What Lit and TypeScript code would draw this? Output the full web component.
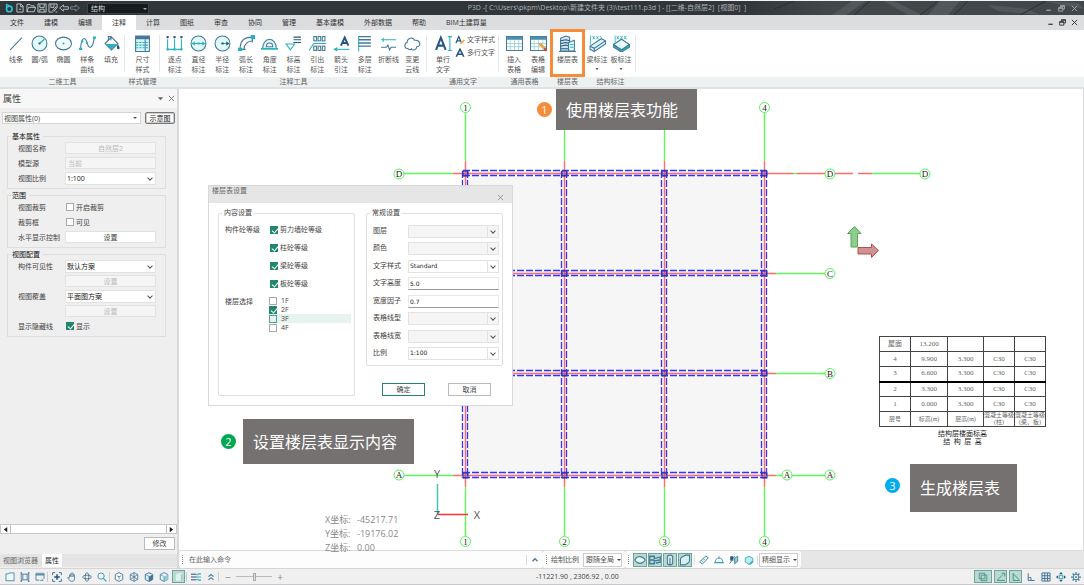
import { LitElement, html, svg, css } from "lit";
import { customElement } from "lit/decorators.js";
import { classMap } from "lit/directives/class-map.js";

const B = "#44789a";
const C = "#25b3bf";
const D = "#26567c";

/* Every glyph is drawn on a 16 x 16 grid. */
const ICONS: Record<string, unknown> = {
  line: svg`<path d="M3 14L14 2.500" stroke=${B}/>`,
  circle: svg`<circle cx="8" cy="8" r="7" fill="#e3f8f9" stroke=${B}/><path d="M8 8l4.500-4" stroke=${C} stroke-width="1.500"/><circle cx="8" cy="8" r="1" fill=${D} stroke="none"/>`,
  ellipse: svg`<ellipse cx="8" cy="8" rx="7.500" ry="6" fill="#f2fcfc" stroke=${B}/><circle cx="8" cy="8" r="1" fill=${C} stroke="none"/>`,
  spline: svg`<path d="M1.500 13C2 2 6 1 7.500 7s5 8 7-5" stroke=${B}/><path d="M0 12h3v2H0zM6.500 6.500h2v2h-2zM13 1.500h3v2h-3zM2 5h2v2H2z" fill=${C} stroke="none"/>`,
  fill: svg`<path d="M2 8l6-6 6 6-6 6z" fill="#fff" stroke=${B}/><path d="M3 8.500h10L8 13.500z" fill=${C} stroke="none"/><path d="M5 5V1.500h2.500V5" stroke=${B}/><path d="M14 8.500c2 3 2 5 .5 5s-2-2-.5-5z" fill=${D} stroke="none"/>`,
  dimstyle: svg`<path d="M1.500 1h13v14.500h-13z" fill="#d8f6f7" stroke=${B}/><path d="M1.500 1h13v3h-13z" fill=${B} stroke="none"/><path d="M2 7h12M2 9.500h12M2 12h12" stroke=${C} stroke-dasharray="2 1"/><path d="M10.500 4v11" stroke=${B}/>`,
  points: svg`<path d="M1.500 4v9.500M8 4v9.500M14.500 4v9.500M1 13.500h14" stroke=${C}/><path d="M.5 1h2v2h-2zM7 1h2v2H7zM13.500 1h2v2h-2z" fill=${D} stroke="none"/><path d="M.5 12.500h2v2h-2zM7 12.500h2v2H7zM13.500 12.500h2v2h-2z" fill=${C} stroke="none"/>`,
  diameter: svg`<circle cx="8" cy="8" r="7" fill="#e3f8f9" stroke=${B}/><path d="M2 8h12" stroke=${C}/><path d="M1.500 8l3-2v4zM14.500 8l-3-2v4zM7 7h2v2H7z" fill=${C} stroke="none"/>`,
  radius: svg`<circle cx="8" cy="8" r="7" fill="#e3f8f9" stroke=${B}/><path d="M7 8h7" stroke=${C}/><path d="M14.500 8l-3-2v4zM7 7h2v2H7z" fill=${D} stroke="none"/>`,
  arc: svg`<path d="M2 13C2 6 6 2 13 2M5.500 13.500C6 9 9 6 13.500 5.500M1 13.500h6M13.500 1v6" stroke=${B}/><path d="M0 12h4v3H0zM12 0h4v4h-4z" fill=${C} stroke="none"/>`,
  angle: svg`<path d="M1.500 13a6.500 9 0 0113 0z" fill="#d8f6f7" stroke=${B}/><path d="M5 11a3 3.500 0 016 0z" fill="#fff" stroke=${B}/><path d="M0 13h16" stroke=${C} stroke-width="1.500"/>`,
  level: svg`<path d="M1 8.500h8L5 14z" stroke=${C}/><path d="M8 2h7M8 4.500h7M8 7h7" stroke=${D}/>`,
  leader: svg`<path d="M0 14.500L4.500 8H16" stroke=${C}/><g stroke=${B}><rect x="4.500" y="1.500" width="2.500" height="4"/><rect x="8.500" y="1.500" width="2.500" height="4"/><rect x="12.500" y="1.500" width="2.500" height="4"/><rect x="4.500" y="10.500" width="2.500" height="4"/><rect x="8.500" y="10.500" width="2.500" height="4"/><rect x="12.500" y="10.500" width="2.500" height="4"/></g>`,
  arrow: svg`<path d="M7.500 10L11 2.500 14.500 10M9 7.500h4" stroke=${D} stroke-width="1.900"/><path d="M2 13.500h13.500" stroke=${C}/><path d="M0 13.500l4-2v4z" fill=${C} stroke="none"/>`,
  multi: svg`<path d="M2.500 1v14.500" stroke=${C}/><path d="M2.500 1.500H14M2.500 4.500H14M2.500 7.500H14M2.500 10.500H14" stroke=${B} stroke-width="1.300"/>`,
  breakline: svg`<path d="M1 4.500h14M3 2.500v4" stroke=${C}/><path d="M1 11.500h5l1.500-2L9 14l1.500-2.500H15" stroke=${B}/>`,
  cloud: svg`<path d="M4 13c-4 0-4-5-1-6 0-5 6-5 7-2 5-1 7 6 2 6 0 3-4 4-5 2-1 1-2 1-3 0z" stroke=${B}/>`,
  text: svg`<path d="M1 14L5.500 2.500 10 14M2.500 10h6" stroke=${D} stroke-width="1.900"/><path d="M14 1.500v13M12 1.500h4M12 14.500h4" stroke=${C}/>`,
  textstyle: svg`<path d="M1.500 13L6 2.500 10.500 13M3.500 9.500h5" stroke=${D} stroke-width="2"/><path d="M9 14l6-6" stroke="#f0a53a" stroke-width="2.500"/>`,
  mtext: svg`<path d="M2 14L8 2l6 12M4.500 10h7" stroke=${D} stroke-width="2.600"/>`,
  table: svg`<path d="M.5 1.500h15v13H.5z" fill="#fff" stroke=${B}/><path d="M.5 1.500h15v3H.5z" fill="#4d8fb0" stroke="none"/><path d="M4 5v9M8 5v9M12 5v9M1 8h14M1 11h14" stroke="#8fc6d3" stroke-width=".7"/>`,
  tableedit: svg`<path d="M.5 1.500h15v13H.5z" fill="#fff" stroke=${B}/><path d="M.5 1.500h15v3H.5z" fill="#4d8fb0" stroke="none"/><path d="M4 5v9M8 5v9M12 5v9M1 8h14M1 11h14" stroke="#8fc6d3" stroke-width=".7"/><path d="M9 8l5.500 5.500" stroke="#f0a53a" stroke-width="2.400"/><path d="M13.500 12.500l2 2.500" stroke="#d24a3a" stroke-width="2"/>`,
  floor: svg`<path d="M1.500 3l5-2 3.500 1v13H1.500z" fill="#cfe6ee" stroke=${B}/><path d="M1.500 5.500l5-1 3.500 1M1.500 8l5-1 3.500 1M1.500 10.500l5-1 3.500 1M1.500 13h8" stroke=${D}/><path d="M9 7l5.500-2v10H9z" fill="#e3f8f9" stroke=${B}/><path d="M10.500 9h3M10.500 11.500h3" stroke=${C}/><path d="M0 15.500h16" stroke=${B}/>`,
  beam: svg`<path d="M1 10.500L11.500 3.500l4 2v3L5 15.500l-4-2z" fill="#d8f6f7" stroke=${B}/><path d="M1 10.500l4 2 10.500-7M5 12.500v3" stroke=${B}/><path d="M1.500 9V.5M3.500 1l2 3M5.500 1l-2 3M7 1l2 3M9 1L7 4M10.500 1l1.500 2" stroke=${C} stroke-width=".8"/>`,
  slab: svg`<path d="M.5 9L8 4l7.500 5L8 14z" fill="#e9fbfb" stroke=${B}/><path d="M.5 9v2.500L8 16l7.500-4.500V9L8 14z" fill=${C} stroke=${B}/><path d="M2 8V.5M3.500 1l2 3M5.500 1l-2 3M7 1l2 3M9 1L7 4M10.500 1l2 3M12.500 1l-2 3" stroke=${C} stroke-width=".8"/>`,
  logo: svg`<path d="M4 1v6M4 2l5 2.500" stroke="#28c4cf" stroke-width="2"/><circle cx="8.500" cy="9.500" r="4.500" stroke="#28c4cf" stroke-width="2.600"/>`,
  file: svg`<path d="M3 1.500h6.500L13 5v9.500H3zM9 2v4h4M6 10h4" stroke="#c8d0d4" stroke-width="1.400"/>`,
  open: svg`<path d="M1.500 14V2.500h5L8 4.500h5V7M1.500 14L4 7h11.500L13 14z" stroke="#c8d0d4" stroke-width="1.400"/>`,
  save: svg`<path d="M1.500 1.500h13v13h-13zM4.500 2v5h7V2M4.500 14v-4h7v4" stroke="#c8d0d4" stroke-width="1.400"/>`,
  saveas: svg`<path d="M14.500 7V1.500h-13v13h6M4.500 2v5h5V2M7 13l6-7 1.500 1.500L9 14M12 14.500h3" stroke="#c8d0d4" stroke-width="1.400"/>`,
  undo: svg`<path d="M1 8l6-5v3h8v4H7v3z" stroke="#c8d0d4" stroke-width="1.300"/>`,
  redo: svg`<path d="M15 8L9 3v3H1v4h8v3z" stroke="#84909a" stroke-width="1.300"/>`,
  min: svg`<path d="M3 12h10" stroke="currentColor" stroke-width="2.500"/>`,
  restore: svg`<path d="M5.500 5V1.500H15V9h-4M1.500 6h9.500v8H1.500zM1.500 7.500H11M6 3h9" stroke="currentColor" stroke-width="1.900"/>`,
  close: svg`<path d="M2 2l12 12M14 2L2 14" stroke="currentColor" stroke-width="1.900"/>`,
  caret: svg`<path d="M2 5h12l-6 7z" fill="currentColor" stroke="none"/>`,
  left: svg`<path d="M12 2v12L4 8z" fill="currentColor" stroke="none"/>`,
  right: svg`<path d="M4 2v12l8-6z" fill="currentColor" stroke="none"/>`,
  up: svg`<path d="M4 10l4-4 4 4" stroke=${B} stroke-width="2"/>`,
  folder: svg`<path d="M1.500 14V3h4l1-1.500h8V14z" fill="#e9fbfb" stroke=${B} stroke-width="1.300"/>`,
  frame: svg`<path d="M4.500 3.500h7v9h-7zM1 1l3.500 2.500M15 1l-3.500 2.500M1 15l3.500-2.500M15 15l-3.500-2.500M2 0v16M14 0v16" stroke=${B} stroke-width="1.400"/>`,
  window: svg`<path d="M1.500 2h13v9M1.500 2v11H7" stroke=${B} stroke-width="1.300"/><path d="M1.500 4.500h13" stroke=${B} stroke-width="2"/><path d="M8 13.500h5l-2-3" stroke=${C} stroke-width="1.300"/>`,
  fit: svg`<path d="M1 5V1h4M11 1h4v4M15 11v4h-4M5 15H1v-4" stroke=${B} stroke-width="1.600"/><path d="M8 3.500v9M3.500 8h9" stroke=${D} stroke-width="2.400"/>`,
  hand: svg`<path d="M4 9V4.500q1-1 2 0V2.500q1-1.500 2 0V2q1-1 2 .5V4q1.500-1 2 .5V11q0 4-4 4-3.500 0-5-3L1 9q1-1.500 3 1M6 4v4M8 3v5M10 4v4" stroke=${B} stroke-width="1.300"/>`,
  orbit: svg`<ellipse cx="8" cy="8" rx="7" ry="3" stroke=${B} stroke-width="1.400"/><ellipse cx="8" cy="8" rx="3" ry="7" stroke=${B} stroke-width="1.400"/>`,
  zoom: svg`<circle cx="6.500" cy="6.500" r="5" fill="#e3f8f9" stroke=${B} stroke-width="1.300"/><path d="M10 10l5 5" stroke=${C} stroke-width="2"/>`,
  cube: svg`<path d="M8 1l6 3v8l-6 3-6-3V4z" fill="#fff" stroke=${B} stroke-width="1.500"/><path d="M4.500 6L8 7.500 11.500 6M8 7.500V12" stroke=${B} stroke-width="1.300"/>`,
  cubewire: svg`<path d="M8 1l6 3v8l-6 3-6-3V4zM2 4l6 4 6-4M8 8v7M8 1v7M2 12l6-4 6 4" stroke=${B} stroke-width="1.300"/>`,
  cubehalf: svg`<path d="M8 1l6 3v8l-6 3-6-3V4z" fill="#d8eff2" stroke=${B} stroke-width="1.500"/><path d="M8 7l6-3v8l-6 3z" fill=${B} stroke="none"/><path d="M2 4l6 3v8" stroke=${B}/>`,
  cubelite: svg`<path d="M8 1l6 3v8l-6 3-6-3V4z" fill="#e9fbfb" stroke=${B} stroke-width="1.400"/><path d="M8 7l6-3v8l-6 3z" fill="#8fd0da" stroke="none"/><path d="M2 4l6 3v8" stroke=${B}/>`,
  solid: svg`<path d="M3 4l4-2h7v10l-3 2H3z" fill="#dff2ee" stroke="none"/><path d="M11 5l3-3v10l-3 2z" fill="#9ccfc4" stroke="none"/>`,
  list: svg`<path d="M0 3.500h9M0 8h9M0 12.500h9" stroke=${D} stroke-width="1.600"/><path d="M10 5l2-2h4M9 8h7M10 11l2 2h4" stroke=${C} stroke-width="1.900"/>`,
  chevs: svg`<path d="M4 7.500L8 4l4 3.500M4 12.500L8 9l4 3.500" stroke=${B} stroke-width="1.700"/>`,
  slabv: svg`<path d="M1 8q3-5 7-4.500 4 0 7 4.500-3 4.500-7 4.500-4 0-7-4.500z" fill="#e9fbfb" stroke=${B} stroke-width="1.400"/>`,
  beamv: svg`<path d="M1 3h6v3l8-2v4l-8 1v4H1zM1 8h6M9 12l6-1V9" stroke=${B} stroke-width="1.700"/>`,
  colv: svg`<path d="M4.500 3v10q3.500 3 7 0V3q-3.500-3-7 0zM8 5v10" fill="#d8eff2" stroke=${B} stroke-width="1.400"/>`,
  wallv: svg`<path d="M2 7q0-2 2-3l5-2.500h5V9q0 2-2 3l-4 2.500H2z" fill="#d8eff2" stroke=${B} stroke-width="1.400"/>`,
  ruler: svg`<path d="M1 11L11 1.500l4 3L5.500 14.500z" fill="#e3f8f9" stroke=${B} stroke-width="1.400"/><path d="M4 9l2 2M7 6l2 2" stroke=${C} stroke-width="1.400"/>`,
  dome: svg`<path d="M2 12q0-7 6-7t6 7zM8 5V2" fill="#e9fbfb" stroke=${B} stroke-width="1.300"/><path d="M0 12.500h16" stroke=${C} stroke-width="1.600"/>`,
  clip: svg`<path d="M2 2h5v7H2z" fill=${D} stroke="none"/><path d="M9 14V5l5-3v8zM1 14l8-12" fill="#8fd0da" stroke=${B} stroke-width="1.400"/>`,
  paint: svg`<path d="M2 5l6-3 6 3v6l-6 4-6-4z" fill="#bfe9ee" stroke=${C} stroke-width="1.400"/><path d="M7 15l6-6 2 2-4 4z" fill=${C} stroke="none"/>`,
  snap: svg`<path d="M2 2h9v9H2zM5 5h9v9H5z" stroke="#3b8a86" stroke-width="1.300"/>`,
  perp: svg`<path d="M2 13.500h12M2 13l9-9M9 2h5v5" stroke="#3b8a86" stroke-width="1.400"/>`,
  ortho: svg`<path d="M3.500 2v11.500H14M3.500 3L13 12" stroke="#3b8a86" stroke-width="1.400"/>`,
  corner: svg`<path d="M3.500 2v11.500H14M3.500 9h4.500v4" stroke=${B} stroke-width="1.600"/>`,
  grid: svg`<path d="M1.500 1.500h13v13h-13zM6 1.500v13M10.500 1.500v13M1.500 6h13M1.500 10.500h13" stroke=${B} stroke-width="1.600"/>`,
  move: svg`<path d="M8 0l3 3.500H5zM8 16l3-3.500H5zM0 8l3.500-3v6zM16 8l-3.500-3v6z" fill=${D} stroke="none"/><path d="M5.500 5.500h5v5h-5z" stroke=${C} stroke-width="1.500"/>`,
  gear: svg`<circle cx="8" cy="8" r="4.500" fill="#e3f8f9" stroke=${B} stroke-width="1.600"/><circle cx="8" cy="8" r="1.500" fill=${B} stroke="none"/><path d="M8 0v3M8 13v3M0 8h3M13 8h3M2.500 2.500l2 2M11.500 11.500l2 2M13.500 2.500l-2 2M4.500 11.500l-2 2" stroke=${B} stroke-width="2"/>`,
};

const icon = (name: string, size: string) =>
  html`<svg class="ic ${size}" viewBox="0 0 16 16" fill="none" aria-hidden="true">${ICONS[name]}</svg>`;

const base = css`
  :host, * { box-sizing: border-box; }
  button, input, select { font: inherit; color: inherit; margin: 0; padding: 0; border-radius: 0; outline: none; }
  button { border: 0; background: none; display: flex; align-items: center; justify-content: center; white-space: nowrap; }
  fieldset { margin: 0; min-width: 0; }
  .ic { display: block; flex: none; }
  .s7 { width: 7px; height: 7px; }
  .s10 { width: 10px; height: 10px; }
  .s12 { width: 12px; height: 12px; }
  .s17 { width: 17px; height: 17px; }
  input[type="checkbox"] { appearance: none; width: 8px; height: 8px; border: 1px solid #a9a9a9; background: #fff; flex: none; position: relative; }
  input[type="checkbox"]:checked { background: #22866f; border-color: #22866f; }
  input[type="checkbox"]:checked::before { content: ""; position: absolute; left: 2px; top: 0; width: 3px; height: 5px; border: solid #fff; border-width: 0 1px 1px 0; transform: rotate(40deg); }
  .drop { position: relative; display: block; min-width: 0; }
  .drop select { appearance: none; display: block; width: 100%; height: 13px; padding: 0 3px; border: 1px solid #e2e2e2; background: #fff; }
  .drop::after { content: ""; position: absolute; right: 4px; top: 4px; width: 3px; height: 3px; border: solid #555; border-width: 0 1px 1px 0; transform: rotate(45deg); pointer-events: none; }
  .drop select:disabled { background: #f5f5f5; opacity: 1; }
`;

@customElement("title-bar")
class TitleBar extends LitElement {
  static styles = [base, css`
    :host { display: block; border-top: 1px solid #f4f4f4; }
    .bar { position: relative; display: flex; align-items: center; height: 14px; background: #30363a; color: #aeb3b6; font-size: 7px; line-height: 12px; }
    .deco { position: absolute; right: 0; top: 0; width: 340px; height: 14px; }
    .tools { display: flex; align-items: center; gap: 1px; padding-left: 4px; }
    .drop { width: 62px; margin-left: 6px; }
    .drop select { height: 11px; background: #171b1d; border-color: #3d4448; color: #d5d8da; line-height: 9px; }
    .drop::after { border: solid transparent; border-width: 2px; border-top-color: #aaa; transform: none; width: 0; height: 0; top: 5px; right: 2px; }
    .title { flex: 1; text-align: center; padding-left: 20px; white-space: pre; position: relative; }
    .win { display: flex; gap: 6px; padding-right: 6px; position: relative; }
  `];
  render() {
    return html`<header class="bar">
      <svg class="deco" viewBox="0 0 340 14" preserveAspectRatio="none" aria-hidden="true">
        <defs><linearGradient id="g"><stop offset="0" stop-color="#30363a"/><stop offset=".25" stop-color="#41484a"/><stop offset="1" stop-color="#41484b"/></linearGradient></defs>
        <path d="M0 0h340v14H0z" fill="url(#g)"/>
        <path d="M88 14l20-14h14l-20 14zM140 0l24 14h14L150 0zM196 0l-12 14h20l12-14zM244 4l40 4 12 6-42-4zM300 0l34 2 6 6-22-4z" fill="#586062" opacity=".7"/>
        <path d="M30 8l20-8M110 14l16-14M176 14l18-14M210 14L224 0M276 14l26-14" stroke="#2b3032" stroke-width="1"/>
      </svg>
      <div class="tools">
        ${["logo", "file", "open", "save", "saveas", "undo", "redo"].map((n) => html`<button aria-label=${n}>${icon(n, "s10")}</button>`)}
        <label class="drop"><select aria-label="专业"><option>结构</option></select></label>
      </div>
      <div class="title">P3D -[ C:\\Users\\pkpm\\Desktop\\新建文件夹 (3)\\test111.p3d ] - [[二维-自然层2]  [视图0]  ]</div>
      <div class="win">${["min", "restore", "close"].map((n) => html`<button aria-label=${n}>${icon(n, "s7")}</button>`)}</div>
    </header>`;
  }
}

type Tool = [string, string[], boolean?];
const GROUPS: { cls: string; name: string; tools: Tool[] }[] = [
  { cls: "g1", name: "二维工具", tools: [["line", ["线条"]], ["circle", ["圆/弧"]], ["ellipse", ["椭圆"]], ["spline", ["样条", "曲线"]], ["fill", ["填充"]]] },
  { cls: "g2", name: "样式管理", tools: [["dimstyle", ["尺寸", "样式"]]] },
  { cls: "g3", name: "注释工具", tools: [["points", ["逐点", "标注"]], ["diameter", ["直径", "标注"]], ["radius", ["半径", "标注"]], ["arc", ["弧长", "标注"]], ["angle", ["角度", "标注"]], ["level", ["标高", "标注"]], ["leader", ["引出", "标注"]], ["arrow", ["箭头", "引注"]], ["multi", ["多层", "标注"]], ["breakline", ["折断线"]], ["cloud", ["变更", "云线"]]] },
  { cls: "g4", name: "通用文字", tools: [["text", ["单行", "文字"]]] },
  { cls: "g5", name: "通用表格", tools: [["table", ["插入", "表格"]], ["tableedit", ["表格", "编辑"]]] },
  { cls: "g6", name: "楼层表", tools: [["floor", ["楼层表"]]] },
  { cls: "g7", name: "结构标注", tools: [["beam", ["梁标注"], true], ["slab", ["板标注"], true]] },
];

@customElement("ribbon-bar")
class RibbonBar extends LitElement {
  static styles = [base, css`
    :host { display: block; font-size: 7px; line-height: 10px; }
    .tabs { display: flex; height: 15px; background: #dcdddf; color: #333; }
    .tabs button { padding: 0 10px; }
    .tabs .on { background: #fff; }
    .win { margin-left: auto; display: flex; align-items: center; gap: 5px; padding-right: 6px; color: #222; }
    .win button { padding: 0; }
    .groups { display: flex; background: linear-gradient(#fff 47px, #eef1f2 47px); border-bottom: 2px solid #dfe2e2; }
    .group { position: relative; display: flex; flex-direction: column; flex: none; }
    .group:not(.g5)::after { content: ""; position: absolute; right: 0; top: 5px; height: 37px; border-right: 1px solid #e4e7e8; }
    .row { display: flex; height: 47px; padding-top: 5px; color: #555; }
    .name { height: 10px; text-align: center; color: #666; }
    .tool { flex: 1; min-width: 0; flex-direction: column; justify-content: flex-start; }
    .tool .ic { margin-bottom: 3px; }
    .tool .mini { margin: 0; color: #333; width: 4px; height: 8px; }
    .g1 { width: 125px; } .g1 .row { padding-left: 4px; padding-right: 2px; }
    .g2 { width: 35px; }
    .g3 { width: 267px; } .g3 .row { padding-left: 3px; padding-right: 3px; }
    .g4 { width: 72px; } .g4 .row { padding-left: 4px; } .g4 .tool { flex: none; width: 24px; }
    .g5 { width: 51px; } .g5 .row { padding-left: 3px; }
    .g6 { width: 35px; }
    .g7 { width: 51px; } .g7 .row { padding-right: 3px; }
    .side { display: flex; flex-direction: column; gap: 3px; font-size: 7px; }
    .side button { gap: 2px; }
    .mark { position: absolute; inset: -1px 0 10px 0; border: 3px solid #f68b38; pointer-events: none; z-index: 1; }
  `];
  render() {
    const tabs = ["文件", "建模", "编辑", "注释", "计算", "图纸", "审查", "协同", "管理", "基本建模", "外部数据", "帮助", "BIM土建算量"];
    return html`<nav class="tabs">
        ${tabs.map((t) => html`<button class=${classMap({ on: t === "注释" })}>${t}</button>`)}
        <div class="win">${["min", "restore", "close"].map((n) => html`<button aria-label=${n}>${icon(n, "s7")}</button>`)}</div>
      </nav>
      <div class="groups">${GROUPS.map((g) => html`<section class="group ${g.cls}">
        <div class="row">
          ${g.tools.map(([ic, lines, more]) => html`<button class="tool">${icon(ic, "s17")}${lines.map((l) => html`<span>${l}</span>`)}${more ? icon("caret", "mini") : ""}</button>`)}
          ${g.cls === "g4" ? html`<div class="side"><button>${icon("textstyle", "s10")}文字样式</button><button>${icon("mtext", "s10")}多行文字</button></div>` : ""}
        </div>
        <div class="name">${g.name}</div>
        ${g.cls === "g6" ? html`<div class="mark"></div>` : ""}
      </section>`)}</div>`;
  }
}

@customElement("property-panel")
class PropertyPanel extends LitElement {
  static styles = [base, css`
    :host { display: flex; flex-direction: column; width: 179px; flex: none; background: #efefef; border-right: 2px solid #d9d9d9; font-size: 7px; line-height: 9px; color: #444; }
    .head { display: flex; align-items: center; height: 19px; background: #f7f7f7; padding: 0 0 0 3px; font-size: 9px; }
    .head span { flex: 1; }
    .head button { width: 11px; color: #666; }
    .pick { display: flex; gap: 4px; padding: 4px 2px 8px; }
    .pick .drop { flex: 1; }
    .pick select { height: 12px; padding: 0 1px; border-color: #d5d5d5; }
    .pick .drop::after { border: solid transparent; border-width: 2px; border-top-color: #555; transform: none; width: 0; height: 0; top: 5px; }
    .pick button { width: 30px; height: 12px; border: 1px solid #777; border-radius: 2px; background: #fff; color: #111; box-shadow: inset 0 0 0 1px #ccc; }
    .sets { display: flex; flex-direction: column; gap: 2px; padding: 0 11px 0 7px; flex: 1; }
    fieldset { border: 1px solid #dedede; padding: 0 9px 3px 10px; }
    legend { padding: 0 3px 0 1px; margin-left: -7px; height: 9px; color: #111; }
    .rows { display: grid; grid-template-columns: 47px 1fr; grid-auto-rows: 14px; row-gap: 1px; align-items: center; }
    .rows input[type="text"] { width: 100%; height: 12px; border: 1px solid #e2e2e2; background: #f5f5f5; color: #bbb; padding: 0 2px; }
    .rows .mid { text-align: center; }
    .rows .drop select { padding: 0 1px; color: #222; }
    .rows button { height: 12px; width: 100%; background: #fff; border: 1px solid #e2e2e2; }
    .rows button:disabled { background: #f5f5f5; color: #bbb; }
    .tick { display: flex; align-items: center; gap: 2px; padding-left: 1px; }
    .scroll { display: flex; height: 10px; border: 1px solid #c9c9c9; background: #fff; }
    .scroll button { width: 9px; color: #222; }
    .scroll div { flex: 1; border: solid #bbb; border-width: 0 1px; }
    .foot { display: flex; justify-content: flex-end; padding: 3px 2px 4px; }
    .foot button { width: 31px; height: 13px; background: #fff; border: 1px solid #bbb; }
    .tabs { display: flex; height: 13px; margin-bottom: 1px; background: #e4e4e4; gap: 1px; color: #666; }
    .tabs button { padding: 0 3px; }
    .tabs .on { background: #fff; color: #222; }
  `];
  render() {
    return html`<div class="head"><span>属性</span><button aria-label="菜单">${icon("caret", "s7")}</button><button aria-label="关闭">${icon("close", "s7")}</button></div>
      <div class="pick"><label class="drop"><select aria-label="对象"><option>视图属性(0)</option></select></label><button>示意图</button></div>
      <div class="sets">
        <fieldset><legend>基本属性</legend><div class="rows">
          <label for="nm">视图名称</label><input id="nm" class="mid" type="text" value="自然层2" disabled>
          <label for="src">模型源</label><input id="src" type="text" value="当前" disabled>
          <label for="sc">视图比例</label><span class="drop"><select id="sc"><option>1:100</option></select></span>
        </div></fieldset>
        <fieldset><legend>范围</legend><div class="rows">
          <span>视图裁剪</span><label class="tick"><input type="checkbox">开启裁剪</label>
          <span>裁剪框</span><label class="tick"><input type="checkbox">可见</label>
          <span>水平显示控制</span><button>设置</button>
        </div></fieldset>
        <fieldset><legend>视图配置</legend><div class="rows">
          <label for="vis">构件可见性</label><span class="drop"><select id="vis"><option>默认方案</option></select></span>
          <span></span><button disabled>设置</button>
          <label for="ov">视图覆盖</label><span class="drop"><select id="ov"><option>平面图方案</option></select></span>
          <span></span><button disabled>设置</button>
          <span>显示隐藏线</span><label class="tick"><input type="checkbox" checked>显示</label>
        </div></fieldset>
      </div>
      <div class="scroll"><button aria-label="左">${icon("left", "s7")}</button><div></div><button aria-label="右">${icon("right", "s7")}</button></div>
      <div class="foot"><button>修改</button></div>
      <div class="tabs"><button>视图浏览器</button><button class="on">属性</button></div>`;
  }
}

@customElement("floor-dialog")
class FloorDialog extends LitElement {
  static styles = [base, css`
    :host { display: block; width: 305px; background: #fff; border: 1px solid #d8d8d8; font-size: 7px; line-height: 10px; color: #444; }
    .head { display: flex; justify-content: space-between; height: 17px; background: #e6e6e6; padding: 0 8px 0 3px; color: #666; }
    .head button { align-self: flex-end; height: 12px; color: #888; }
    .body { display: grid; grid-template-columns: 1fr 1fr; column-gap: 11px; padding: 5px 9px 9px; }
    fieldset { border: 1px solid #dfdfdf; border-radius: 2px; padding: 0 3px 5px 6px; }
    legend { height: 10px; padding: 0 2px; margin-left: -3px; }
    .two { display: grid; grid-template-columns: 44px 1fr; padding-top: 3px; }
    .two > span { line-height: 18px; }
    .two .near { line-height: 11px; }
    .grades { padding-left: 1px; margin-bottom: 3px; }
    .grades label { display: flex; align-items: center; gap: 2px; height: 18px; }
    .floors label { display: flex; align-items: center; gap: 4px; height: 9px; }
    .floors .hot { background: #e6f3ef; }
    .floors .hot input { background: #e6f3ef; border-color: #4aa38f; }
    .fields { display: flex; flex-direction: column; justify-content: space-between; height: 135px; margin-top: 7px; }
    .field { display: grid; grid-template-columns: 35px 1fr; align-items: center; }
    .field label { line-height: 11px; padding-bottom: 2px; }
    .field .drop::before { content: ""; position: absolute; right: 11px; top: 1px; bottom: 1px; border-left: 1px solid #e2e2e2; z-index: 1; }
    .field .drop select, .field input { font-family: "DejaVu Sans", sans-serif; font-size: 6px; padding: 0 1px; color: #222; }
    .field input { height: 13px; width: 100%; border: 1px solid #e8e8e8; border-bottom-color: #999; }
    .acts { display: flex; gap: 23px; padding: 17px 0 0 16px; }
    .acts button { width: 43px; height: 13px; border: 1px solid #bbb; background: #fff; }
    .acts .ok { border-color: #22866f; }
  `];
  render() {
    const f: [string, string, string][] = [["图层", "", "d"], ["颜色", "", "d"], ["文字样式", "Standard", "s"], ["文字高度", "5.0", "t"], ["宽度因子", "0.7", "t"], ["表格线型", "", "d"], ["表格线宽", "", "d"], ["比例", "1:100", "s"]];
    return html`<div class="head"><span>楼层表设置</span><button aria-label="关闭">${icon("close", "s7")}</button></div>
      <div class="body">
        <fieldset><legend>内容设置</legend><div class="two">
          <span>构件砼等级</span>
          <div class="grades">${["剪力墙", "柱", "梁", "板"].map((t) => html`<label><input type="checkbox" checked>${t}砼等级</label>`)}</div>
          <span class="near">楼层选择</span>
          <div class="floors">${[1, 2, 3, 4].map((n) => html`<label class=${classMap({ hot: n === 3 })}><input type="checkbox" ?checked=${n === 2}>${n}F</label>`)}</div>
        </div></fieldset>
        <div>
          <fieldset><legend>常规设置</legend><div class="fields">
            ${f.map(([n, v, k], i) => html`<div class="field"><label for="f${i}">${n}</label>${k === "t"
              ? html`<input id="f${i}" type="text" value=${v}>`
              : html`<span class="drop"><select id="f${i}" ?disabled=${k === "d"}><option>${v}</option></select></span>`}</div>`)}
          </div></fieldset>
          <div class="acts"><button class="ok">确定</button><button>取消</button></div>
        </div>
      </div>`;
  }
}

const XS = [286, 385, 485, 585];
const YS = [84, 184, 284, 386];

@customElement("drawing-canvas")
class DrawingCanvas extends LitElement {
  static styles = [base, css`
    :host { display: block; position: relative; z-index: 1; flex: 1; min-height: 0; background: #fff; border-right: 1px solid #ddd; }
    .plan { position: absolute; inset: 0; width: 100%; height: 100%; }
    .axis { font-family: "Liberation Serif", serif; font-size: 9px; text-anchor: middle; fill: #222; }
    .ucs { font-family: "Open Sans", sans-serif; font-size: 11px; text-anchor: middle; fill: #555; }
    .float { position: absolute; }
    .dialog { left: 29px; top: 96px; }
    .coords { left: 146px; top: 424px; display: grid; grid-template-columns: 32px auto; line-height: 14px; font-size: 9px; color: #888; }
    .note { background: #757171; color: #fff; font-size: 16px; line-height: 20px; display: flex; align-items: center; padding: 0 16px 0 10px; white-space: nowrap; }
    .n1 { left: 377px; top: 0; height: 41px; width: 141px; }
    .n2 { left: 64px; top: 330px; height: 45px; width: 171px; }
    .n3 { left: 731px; top: 375px; height: 48px; width: 107px; }
    .dot { width: 15px; height: 15px; border-radius: 50%; color: #fff; font-size: 11px; line-height: 15px; text-align: center; }
    .d1 { left: 358px; top: 13px; background: #f68b38; }
    .d2 { left: 42px; top: 345px; background: #00a650; }
    .d3 { left: 706px; top: 389px; background: #00aeef; }
    .sheet { left: 700px; top: 247px; width: 167px; font-family: "Liberation Serif", "Noto Sans CJK SC", serif; color: #666; }
    table { border-collapse: collapse; table-layout: fixed; width: 100%; font-size: 7px; line-height: 7px; }
    td { border: 1px solid #444; height: 15px; padding: 0; text-align: center; white-space: nowrap; }
    .thick td { border-bottom: 2px solid #000; }
    .last td { font-size: 6px; }
    .c1 { width: 31px; } .c2 { width: 37px; } .c3 { width: 36px; } .c4 { width: 31px; }
    .cap { font-size: 7px; line-height: 8px; text-align: center; color: #222; padding-top: 3px; white-space: pre; }
  `];
  private bubble(x: number, y: number, t: string) {
    return svg`<circle cx=${x} cy=${y} r="5" fill="#fff" stroke="#5cf05c"/><text class="axis" x=${x} y=${y + 3}>${t}</text>`;
  }
  render() {
    const rows = [["屋面", "13.200", "", "", ""], ["4", "9.900", "3.300", "C30", "C30"], ["3", "6.600", "3.300", "C30", "C30"], ["2", "3.300", "3.300", "C30", "C30"], ["1", "0.000", "3.300", "C30", "C30"]];
    const beams = [
      ...XS.flatMap((x) => [x - 3, x + 2].map((v) => `M${v + 0.5} 82V389`)),
      ...YS.flatMap((y) => [y - 2, y + 3].map((v) => `M284 ${v - 0.5}H588`)),
    ].join("");
    return html`<svg class="plan" fill="none" aria-hidden="true">
        <rect x="285" y="83" width="302" height="304" fill="#f6f6f6"/>
        <path d="M286.500 24V72M385.500 24V72M485.500 24V72M585.500 24V72M286.500 398V447M385.500 398V447M485.500 398V447M585.500 398V447M225 84.500H274M693 84.500H741M597 184.500H646M597 284.500H646M225 386.500H274M597 386.500H646M614 84.500h4" stroke="#5cf85c" stroke-width="1.400"/>
        <path d="M286.500 72V398M385.500 72V398M485.500 72V398M585.500 72V398M274 84.500H614M618 84.500H674M679 84.500H693M274 184.500H597M274 284.500H597M274 386.500H597" stroke="#ff6c6c" stroke-width="1.400"/>
        <path d=${beams} stroke="#3434f4" stroke-width="1.300" stroke-dasharray="7 2"/>
        ${XS.map((x) => YS.map((y) => svg`<rect x=${x - 2} y=${y - 2} width="5" height="5" fill="#22a" fill-opacity=".2" stroke="#33a"/>`))}
        ${this.bubble(XS[0] + 0.5, 18.5, "1")}${this.bubble(XS[3] + 0.5, 18.5, "4")}
        ${[1, 2, 3, 4].map((n, i) => this.bubble(XS[i] + 0.5, 452.5, String(n)))}
        ${this.bubble(220, 85, "D")}${this.bubble(651, 85, "D")}${this.bubble(746, 85, "D")}
        ${this.bubble(651, 184.5, "C")}${this.bubble(651, 284.5, "B")}
        ${this.bubble(220, 386, "A")}${this.bubble(608, 386, "A")}${this.bubble(651, 386, "A")}
        <path d="M258.500 395v30" stroke="#3cc8b0" stroke-width="1.500"/><path d="M259 425.500h30" stroke="#f33" stroke-width="1.500"/>
        <text class="ucs" x="258" y="389">Y</text><text class="ucs" x="258" y="430">Z</text><text class="ucs" x="298" y="430">X</text>
        <path d="M675.500 137.500l6.500 7h-3.500v13.500h-6.500v-13.500h-3.500z" fill="#93c993" stroke="#4aae4a"/>
        <path d="M699.500 161.500l-7-6.500v3.500h-13.500v6.500h13.500v3.500z" fill="#cd9393" stroke="#b84a4a"/>
      </svg>
      <div class="float coords"><span>X坐标:</span><span>-45217.71</span><span>Y坐标:</span><span>-19176.02</span><span>Z坐标:</span><span>0.00</span></div>
      <div class="float sheet"><table>
        <colgroup><col class="c1"><col class="c2"><col class="c3"><col class="c4"><col></colgroup>
        <tbody>${rows.map((r, i) => html`<tr class=${classMap({ thick: i === 2 })}>${r.map((c) => html`<td>${c}</td>`)}</tr>`)}
        <tr class="last"><td>层号</td><td>标高(m)</td><td>层高(m)</td><td>混凝土等级<br>(柱)</td><td>混凝土等级<br>(梁、板)</td></tr></tbody>
      </table><div class="cap">结构层楼面标高
结  构  层  高</div></div>
      <floor-dialog class="float dialog"></floor-dialog>
      <div class="float dot d1">1</div><div class="float note n1">使用楼层表功能</div>
      <div class="float dot d2">2</div><div class="float note n2">设置楼层表显示内容</div>
      <div class="float dot d3">3</div><div class="float note n3">生成楼层表</div>`;
  }
}

@customElement("command-bar")
class CommandBar extends LitElement {
  static styles = [base, css`
    :host { display: flex; height: 18px; background: #e6e6e6; border-top: 1px solid #ddd; font-size: 7px; line-height: 10px; color: #555; }
    .seg { display: flex; align-items: center; background: #fdfdfd; padding: 0 3px; border-radius: 3px; }
    .grip { width: 1px; height: 9px; border-left: 1px dotted #888; margin-right: 4px; flex: none; }
    .cmd { width: 364px; padding-right: 0; }
    .cmd input { flex: 1; min-width: 0; border: 0; background: none; height: 12px; padding-left: 2px; }
    .cmd input::placeholder { color: #666; opacity: 1; }
    .cmd button { width: 17px; border-left: 1px solid #ddd; height: 10px; }
    .drop { width: 39px; }
    .drop::after { border: solid transparent; border-width: 2px; border-top-color: #444; transform: none; width: 0; height: 0; top: 6px; right: 1px; }
    .drop select { border-color: #ccc; height: 14px; padding: 0 2px; }
    .ratio { width: 82px; padding-right: 0; }
    .ratio .drop { margin-left: 4px; }
    .tg { width: 14px; height: 14px; margin-right: 1px; background: #b9d9d2; border: 1px solid #6aa898; }
    .pl { width: 15px; height: 14px; }
    .bar { width: 1px; height: 10px; background: #ddd; margin: 0 1px; }
  `];
  render() {
    return html`<div class="seg cmd"><i class="grip"></i><input type="text" placeholder="在此输入命令" aria-label="命令"><button aria-label="展开">${icon("up", "s10")}</button></div>
      <div class="seg ratio"><i class="grip"></i><label for="r">绘制比例</label><span class="drop"><select id="r"><option>跟随全局</option></select></span></div>
      <div class="seg"><i class="grip"></i>
        ${["slabv", "beamv", "colv", "wallv"].map((n) => html`<button class="tg" aria-label=${n}>${icon(n, "s12")}</button>`)}<i class="bar"></i>
        ${["ruler", "dome", "clip", "paint"].map((n) => html`<button class="pl" aria-label=${n}>${icon(n, "s10")}</button>`)}<i class="bar"></i>
        <span class="drop"><select aria-label="显示"><option>精细显示</option></select></span></div>`;
  }
}

@customElement("status-bar")
class StatusBar extends LitElement {
  static styles = [base, css`
    :host { display: grid; grid-template-columns: minmax(auto, 536px) auto 1fr; align-items: center; height: 17px; background: #f0f0f0; border-top: 1px solid #d5d5d5; border-bottom: 1px solid #c8c8cc; font-size: 7px; line-height: 10px; color: #444; }
    .set { display: flex; align-items: center; padding-left: 2px; white-space: nowrap; }
    .set button { width: 15px; height: 13px; }
    .bar { width: 1px; height: 10px; background: #ccc; margin: 0 1px 0 0; }
    .on { background: #b9d9d2; box-shadow: inset 0 0 0 1px #6aa898; }
    .set .on { width: 13px; margin: 0 1px; }
    .end { justify-content: flex-end; padding-right: 1px; }
    .set .wide { width: 18px; gap: 1px; }
    .set .pm { color: #888; font-size: 10px; width: 16px; }
    input[type="range"] { appearance: none; width: 36px; height: 10px; background: linear-gradient(#bbb, #bbb) center / 100% 1px no-repeat; }
    input[type="range"]::-webkit-slider-thumb { appearance: none; width: 3px; height: 8px; background: #ddd; border: 1px solid #aaa; }
  `];
  private b(names: string[], on: string[] = []) {
    return names.map((n) => html`<button class=${classMap({ on: on.includes(n) })} aria-label=${n}>${icon(n, "s10")}</button>`);
  }
  render() {
    return html`<div class="set">${this.b(["folder", "frame", "window"])}<i class="bar"></i>${this.b(["fit", "hand", "orbit", "zoom"])}<i class="bar"></i>${this.b(["cube", "cubewire", "cubehalf", "cubelite", "solid"], ["solid"])}<i class="bar"></i>${this.b(["list", "chevs"])}<i class="bar"></i>
        <button class="pm">−</button><input type="range" aria-label="缩放" value="50"><button class="pm">+</button></div>
      <output>-11221.90 , 2306.92 , 0.00</output>
      <div class="set end"><button class="on wide" aria-label="snap">${icon("snap", "s10")}</button>${this.b(["perp", "ortho", "corner", "grid", "move", "gear"], ["perp", "ortho"])}</div>`;
  }
}

@customElement("app-root")
class AppRoot extends LitElement {
  static styles = css`
    :host { display: flex; flex-direction: column; height: 100vh; overflow: hidden; background: #fff; font-family: "Open Sans", "Noto Sans CJK SC", sans-serif; }
    .main { display: flex; flex: 1; min-height: 0; }
    .work { display: flex; flex-direction: column; flex: 1; min-width: 0; }
  `;
  render() {
    return html`<title-bar></title-bar><ribbon-bar></ribbon-bar>
      <div class="main"><property-panel></property-panel>
        <div class="work"><drawing-canvas></drawing-canvas><command-bar></command-bar></div></div>
      <status-bar></status-bar>`;
  }
}
